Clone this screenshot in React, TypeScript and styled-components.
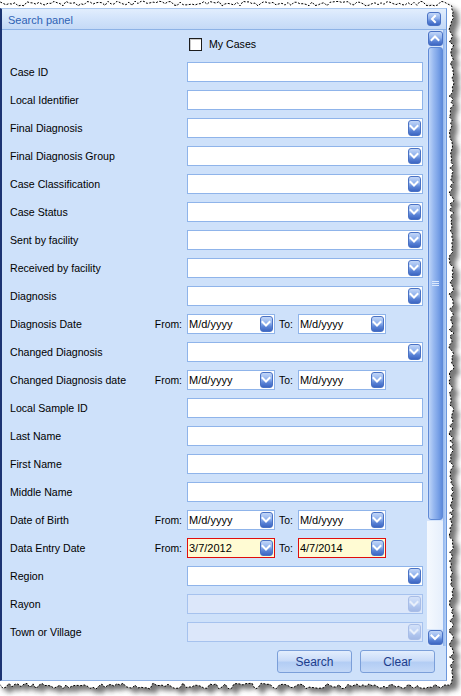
import React from "react";
import styled, { createGlobalStyle, css } from "styled-components";

const GlobalStyle = createGlobalStyle`
  html, body { margin: 0; padding: 0; background: #ffffff; }
  body { font-family: "Liberation Sans", Arial, sans-serif; font-size: 11px; color: #000; }
  * { box-sizing: border-box; }
`;

const Page = styled.div`
  position: relative;
  width: 461px;
  height: 696px;
  background: #ffffff;
  overflow: hidden;
  padding-top: 8px;
`;

const Panel = styled.div`
  width: 447px;
  height: 673px;
  display: flex;
  flex-direction: column;
  background: #cee1fa;
  border-left: 2px solid #1c3372;
  border-right: 1px solid #6b97dc;
  border-top: 1px solid #a9c7ef;
  border-bottom: 1px solid #8fb2e6;
`;

const Header = styled.div`
  height: 21px;
  flex: none;
  display: flex;
  align-items: center;
  justify-content: space-between;
  padding: 0 5px 0 6px;
  background: linear-gradient(180deg, #e2eefd 0%, #d3e4fb 45%, #c4d9f6 100%);
  border-bottom: 1px solid #8db2e6;
`;

const HeaderTitle = styled.span`
  color: #2f62b4;
  font-size: 11px;
  padding-top: 1px;
`;

const roundBlue = css`
  border-radius: 3px;
  border: 1px solid #4a72c4;
  background: linear-gradient(180deg, #c3d7f8 0%, #8eb0ec 45%, #5a83d6 70%, #3d66c2 100%);
  display: flex;
  align-items: center;
  justify-content: center;
`;

const CollapseButton = styled.div`
  ${roundBlue};
  width: 14px;
  height: 14px;
`;

const Body = styled.div`
  flex: none;
  height: 616px;
  display: flex;
`;

const Form = styled.div`
  width: 425px;
  flex: none;
  display: flex;
  flex-direction: column;
`;

const Row = styled.div`
  height: 28px;
  display: grid;
  grid-template-columns: 1fr auto 236px;
  align-items: center;
  padding: 0 4px 0 8px;
`;

const Label = styled.span`
  font-size: 10.6px;
  color: #000;
  white-space: nowrap;
`;

const Prefix = styled.span`
  font-size: 10.4px;
  margin-right: 5px;
`;

const Field = styled.div<{ $disabled?: boolean; $error?: boolean; $width?: number }>`
  height: 20px;
  width: ${(p) => (p.$width ? `${p.$width}px` : "100%")};
  display: flex;
  align-items: center;
  padding: 1px;
  border: 1px solid ${(p) => (p.$error ? "#e00d0d" : p.$disabled ? "#a6c2ee" : "#8fb4ea")};
  background: ${(p) => (p.$error ? "#fffbd3" : p.$disabled ? "#dce7fa" : "#ffffff")};
`;

const FieldText = styled.span`
  flex: 1;
  font-size: 11px;
  color: #000;
  white-space: nowrap;
  overflow: hidden;
`;

const DropButton = styled.div<{ $disabled?: boolean }>`
  ${roundBlue};
  width: 13px;
  height: 16px;
  flex: none;
  opacity: ${(p) => (p.$disabled ? 0.35 : 1)};
`;

const DateRange = styled.div`
  display: flex;
  align-items: center;
`;

const ToLabel = styled.span`
  font-size: 10.4px;
  margin: 0 5px 0 4px;
`;

const CheckRow = styled.div`
  display: flex;
  align-items: center;
  gap: 7px;
  padding-left: 2px;
`;

const CheckBox = styled.div`
  width: 13px;
  height: 13px;
  background: #ffffff;
  border: 1px solid #1d1d1d;
  box-shadow: inset 1px 1px 0 #c9c9c9;
`;

const ScrollColumn = styled.div`
  width: 16px;
  flex: none;
  display: flex;
  flex-direction: column;
  align-items: center;
  background: #d6e5fb;
  padding: 1px 0 1px;
  gap: 1px;
`;

const ScrollButton = styled.div`
  ${roundBlue};
  width: 15px;
  height: 15px;
  flex: none;
`;

const Thumb = styled.div`
  width: 15px;
  height: 473px;
  flex: none;
  border-radius: 3px;
  border: 1px solid #5f8ad6;
  background: linear-gradient(90deg, #bdd4f8 0%, #98b9f0 35%, #7aa2e7 70%, #5e8bdc 100%);
  display: flex;
  align-items: center;
  justify-content: center;
`;

const Track = styled.div`
  width: 16px;
  flex: 1;
  background: linear-gradient(90deg, #f5f9fe 0%, #e6effc 100%);
`;

const ScrollEdge = styled.div`
  width: 3px;
  flex: none;
  background: linear-gradient(90deg, #8fb4ee 0%, #b8d1f5 100%);
`;

const Footer = styled.div`
  flex: 1;
  display: flex;
  justify-content: flex-end;
  align-items: flex-start;
  gap: 8px;
  padding: 4px 11px 0 0;
`;

const Button = styled.div`
  width: 75px;
  height: 23px;
  border: 1px solid #7b9fd9;
  border-radius: 3px;
  background: linear-gradient(180deg, #e3eefd 0%, #cadcf8 45%, #b3cdf4 55%, #c3d8f7 100%);
  color: #1c3c8c;
  font-size: 12px;
  display: flex;
  align-items: center;
  justify-content: center;
`;

const Overlay = styled.svg`
  position: absolute;
  left: 0;
  top: 0;
  pointer-events: none;
`;

const Chevron = ({ dir, w = 13, h = 16 }: { dir: "down" | "up" | "left"; w?: number; h?: number }) => {
  const cx = w / 2 - 0.5;
  const cy = h / 2;
  let pts = "";
  if (dir === "down") pts = `${cx - 3.5},${cy - 2} ${cx},${cy + 1.5} ${cx + 3.5},${cy - 2}`;
  if (dir === "up") pts = `${cx - 3.5},${cy + 1.5} ${cx},${cy - 2} ${cx + 3.5},${cy + 1.5}`;
  if (dir === "left") pts = `${cx + 1.5},${cy - 3} ${cx - 1.5},${cy} ${cx + 1.5},${cy + 3}`;
  return (
    <svg width={w - 2} height={h - 2} viewBox={`1 1 ${w - 2} ${h - 2}`}>
      <polyline points={pts} fill="none" stroke="#ffffff" strokeWidth={2} strokeLinecap="square" />
    </svg>
  );
};

const Gripper = () => (
  <svg width="7" height="7" viewBox="0 0 7 7">
    <path d="M0 1.5H7M0 3.5H7M0 5.5H7" stroke="#dbe8fc" strokeWidth="1" />
  </svg>
);

type RowDef =
  | { kind: "text"; label: string }
  | { kind: "combo"; label: string; disabled?: boolean }
  | { kind: "date"; label: string; from?: string; to?: string; error?: boolean };

const rows: RowDef[] = [
  { kind: "text", label: "Case ID" },
  { kind: "text", label: "Local Identifier" },
  { kind: "combo", label: "Final Diagnosis" },
  { kind: "combo", label: "Final Diagnosis Group" },
  { kind: "combo", label: "Case Classification" },
  { kind: "combo", label: "Case Status" },
  { kind: "combo", label: "Sent by facility" },
  { kind: "combo", label: "Received by facility" },
  { kind: "combo", label: "Diagnosis" },
  { kind: "date", label: "Diagnosis Date" },
  { kind: "combo", label: "Changed Diagnosis" },
  { kind: "date", label: "Changed Diagnosis date" },
  { kind: "text", label: "Local Sample ID" },
  { kind: "text", label: "Last Name" },
  { kind: "text", label: "First Name" },
  { kind: "text", label: "Middle Name" },
  { kind: "date", label: "Date of Birth" },
  { kind: "date", label: "Data Entry Date", from: "3/7/2012", to: "4/7/2014", error: true },
  { kind: "combo", label: "Region" },
  { kind: "combo", label: "Rayon", disabled: true },
  { kind: "combo", label: "Town or Village", disabled: true },
];

const DateField = ({ value, error }: { value?: string; error?: boolean }) => (
  <Field $width={88} $error={error}>
    <FieldText>{value ?? "M/d/yyyy"}</FieldText>
    <DropButton>
      <Chevron dir="down" />
    </DropButton>
  </Field>
);

const FormRow = ({ def }: { def: RowDef }) => {
  if (def.kind === "date") {
    return (
      <Row>
        <Label>{def.label}</Label>
        <Prefix>From:</Prefix>
        <DateRange>
          <DateField value={def.from} error={def.error} />
          <ToLabel>To:</ToLabel>
          <DateField value={def.to} error={def.error} />
        </DateRange>
      </Row>
    );
  }
  return (
    <Row>
      <Label>{def.label}</Label>
      <span />
      <Field $disabled={def.kind === "combo" && def.disabled}>
        <FieldText />
        {def.kind === "combo" && (
          <DropButton $disabled={def.disabled}>
            <Chevron dir="down" />
          </DropButton>
        )}
      </Field>
    </Row>
  );
};

const rnd = (i: number, s: number) => {
  const v = Math.sin(i * 12.9898 + s * 78.233) * 43758.5453;
  return v - Math.floor(v);
};

const buildEdge = () => {
  const pts: string[] = [];
  pts.push(`-3,${3}`);
  for (let x = 0; x <= 449; x += 3) pts.push(`${x},${(1 + rnd(x, 1) * 5).toFixed(1)}`);
  for (let y = 6; y <= 684; y += 3) pts.push(`${(449 + rnd(y, 2) * 5).toFixed(1)},${y}`);
  for (let x = 450; x >= 0; x -= 3) pts.push(`${x},${(683 + rnd(x, 3) * 6).toFixed(1)}`);
  pts.push(`-3,686`);
  return `M${pts.join(" L")} Z`;
};

const TornEdges = () => {
  const d = React.useMemo(buildEdge, []);
  return (
    <Overlay width="461" height="696" viewBox="0 0 461 696">
      <defs>
        <filter id="blur" x="-5%" y="-5%" width="110%" height="110%">
          <feGaussianBlur stdDeviation="2.5" />
        </filter>
        <mask id="outside">
          <rect x="0" y="0" width="461" height="696" fill="white" />
          <path d={d} fill="black" />
        </mask>
      </defs>
      <g mask="url(#outside)">
        <path d={d} transform="translate(6 5)" fill="#4a4a4a" opacity="0.75" filter="url(#blur)" />
      </g>
      <path d={d} fill="none" stroke="#000" strokeWidth="1" strokeDasharray="2 1.5" />
    </Overlay>
  );
};

export default function App() {
  return (
    <>
      <GlobalStyle />
      <Page>
        <Panel>
          <Header>
            <HeaderTitle>Search panel</HeaderTitle>
            <CollapseButton>
              <Chevron dir="left" w={14} h={14} />
            </CollapseButton>
          </Header>
          <Body>
            <Form>
              <Row>
                <span />
                <span />
                <CheckRow>
                  <CheckBox />
                  <Label>My Cases</Label>
                </CheckRow>
              </Row>
              {rows.map((r) => (
                <FormRow key={r.label} def={r} />
              ))}
            </Form>
            <ScrollColumn>
              <ScrollButton>
                <Chevron dir="up" w={15} h={15} />
              </ScrollButton>
              <Thumb>
                <Gripper />
              </Thumb>
              <Track />
              <ScrollButton>
                <Chevron dir="down" w={15} h={15} />
              </ScrollButton>
            </ScrollColumn>
            <ScrollEdge />
          </Body>
          <Footer>
            <Button>Search</Button>
            <Button>Clear</Button>
          </Footer>
        </Panel>
        <TornEdges />
      </Page>
    </>
  );
}
